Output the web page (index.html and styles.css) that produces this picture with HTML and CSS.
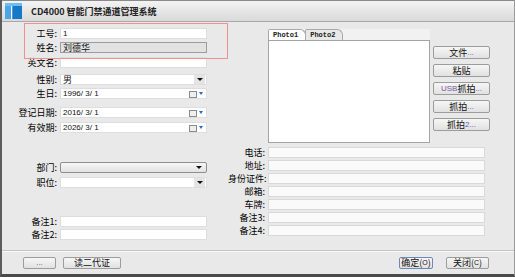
FILE: index.html
```html
<!DOCTYPE html>
<html lang="zh-CN">
<head>
  <meta charset="UTF-8" />
  <title>CD4000 智能门禁通道管理系统</title>
  <link rel="stylesheet" href="styles.css">
</head>
<body>
  <div class="janela">
    <div class="titulo">
      <svg class="logo" width="17" height="16" viewBox="0 0 17 16">
        <rect width="17" height="16" fill="#1c86d6"/>
        <rect x="0" y="0" width="17" height="3" fill="#6cbdf2"/>
        <rect x="0" y="3" width="6" height="13" fill="#4aa6ea"/>
        <rect x="6" y="3" width="1.5" height="13" fill="#ffffff"/>
        <rect x="7.5" y="3" width="9.5" height="13" fill="#1778c8"/>
      </svg>
      <span>CD4000 智能门禁通道管理系统</span>
    </div>

    <div class="principal">
      <!-- coluna da esquerda -->
      <div class="col-esq">
        <div class="linha">
          <label>工号:</label>
          <div class="campo">1</div>
        </div>
        <div class="linha mt3">
          <label>姓名:</label>
          <div class="campo cinza">刘德华</div>
        </div>
        <div class="linha mt4">
          <label>英文名:</label>
          <div class="campo"></div>
        </div>
        <div class="linha mt6">
          <label>性别:</label>
          <div class="campo combo">男<span class="seta"></span></div>
        </div>
        <div class="linha mt3">
          <label>生日:</label>
          <div class="campo data">1996/ 3/ 1<span class="cal"></span><span class="seta-azul"></span></div>
        </div>
        <div class="linha mt8">
          <label>登记日期:</label>
          <div class="campo data">2016/ 3/ 1<span class="cal"></span><span class="seta-azul"></span></div>
        </div>
        <div class="linha mt4">
          <label>有效期:</label>
          <div class="campo data">2026/ 3/ 1<span class="cal"></span><span class="seta-azul"></span></div>
        </div>
        <div class="linha mt29">
          <label>部门:</label>
          <div class="campo combo-btn"><span class="seta-preta"></span></div>
        </div>
        <div class="linha mt4">
          <label>职位:</label>
          <div class="campo combo"><span class="seta"></span></div>
        </div>
        <div class="linha mt28">
          <label>备注1:</label>
          <div class="campo"></div>
        </div>
        <div class="linha mt2">
          <label>备注2:</label>
          <div class="campo"></div>
        </div>
      </div>

      <!-- coluna da direita -->
      <div class="col-dir">
        <div class="foto-area">
          <div class="abas">
            <div class="abas-topo">
              <span class="aba ativa">Photo1</span>
              <span class="aba">Photo2</span>
            </div>
            <div class="painel"></div>
          </div>
          <div class="botoes-foto">
            <button class="btn">文件<i>...</i></button>
            <button class="btn">粘贴</button>
            <button class="btn"><i>USB</i>抓拍<i>...</i></button>
            <button class="btn">抓拍<i>...</i></button>
            <button class="btn">抓拍<i>2...</i></button>
          </div>
        </div>
        <div class="dados">
          <div class="linha-d"><label>电话:</label><div class="campo-d"></div></div>
          <div class="linha-d"><label>地址:</label><div class="campo-d"></div></div>
          <div class="linha-d"><label>身份证件:</label><div class="campo-d"></div></div>
          <div class="linha-d"><label>邮箱:</label><div class="campo-d"></div></div>
          <div class="linha-d"><label>车牌:</label><div class="campo-d"></div></div>
          <div class="linha-d"><label>备注3:</label><div class="campo-d"></div></div>
          <div class="linha-d"><label>备注4:</label><div class="campo-d"></div></div>
        </div>
      </div>

      <div class="destaque"></div>
    </div>

    <div class="rodape">
      <div class="grupo">
        <button class="btn b-pontos"><i>...</i></button>
        <button class="btn b-ler">读二代证</button>
      </div>
      <div class="grupo">
        <button class="btn b-ok">确定(<u>O</u>)</button>
        <button class="btn b-fechar">关闭(<u>C</u>)</button>
      </div>
    </div>
  </div>
</body>
</html>
```

FILE: styles.css
```css
body {
  margin: 0;
  background: #e9e9e9;
  font-family: "Noto Sans CJK SC", "Liberation Sans", sans-serif;
  font-size: 9px;
  color: #111;
}
.janela {
  width: 515px;
  height: 277px;
  box-sizing: border-box;
  border-left: 2px solid #5c5c5c;
  border-right: 1px solid #9a9a9a;
  border-bottom: 3px solid #4a4a4a;
  background: #e9e9e9;
  display: flex;
  flex-direction: column;
}
.titulo {
  border-top: 1px solid #8a8a8a;
  border-bottom: 1px solid #a8a8a8;
  background: linear-gradient(#f3f3f3, #d9d9d9);
  display: flex;
  align-items: center;
  box-sizing: border-box;
  height: 22px;
}
.titulo .logo {
  margin-left: 3px;
  margin-right: 9px;
}
.titulo span {
  font-weight: bold;
  font-size: 9px;
  color: #222;
}
.principal {
  height: 228px;
  display: grid;
  grid-template-columns: 226px 1fr;
  position: relative;
  border-bottom: 1px solid #c4c4c4;
}
.destaque {
  position: absolute;
  left: 22px;
  top: 1px;
  width: 202px;
  height: 34px;
  border: 1px solid #f09090;
}
.col-esq {
  padding-top: 6px;
}
.linha {
  display: flex;
  align-items: center;
  height: 11px;
}
.linha label {
  width: 55px;
  text-align: right;
  font-weight: 400;
  color: #000;
  line-height: 11px;
  white-space: nowrap;
}
.mt2 { margin-top: 2px; }
.mt3 { margin-top: 3px; }
.mt4 { margin-top: 4px; }
.mt6 { margin-top: 6px; }
.mt8 { margin-top: 8px; }
.mt28 { margin-top: 28px; }
.mt29 { margin-top: 29px; }
.campo {
  margin-left: 3px;
  width: 147px;
  height: 11px;
  box-sizing: border-box;
  background: #fff;
  border: 1px solid #dedede;
  padding-left: 2px;
  line-height: 9px;
  position: relative;
  font-family: "Liberation Sans", "Noto Sans CJK SC", sans-serif;
  font-size: 8px;
}
.campo.cinza {
  background: #e2e2e2;
  border-color: #9c9c9c;
  font-family: "Noto Sans CJK SC", sans-serif;
  font-size: 9px;
}
.combo {
  font-family: "Noto Sans CJK SC", sans-serif;
  font-size: 9px;
}
.seta {
  position: absolute;
  right: 1px;
  top: 0;
  width: 11px;
  height: 9px;
  background: #e4e4e4;
}
.seta::after, .seta-preta::after {
  content: "";
  position: absolute;
  left: 3px;
  top: 3px;
  border-left: 3px solid transparent;
  border-right: 3px solid transparent;
  border-top: 3px solid #111;
}
.combo-btn {
  border: 1px solid #8e8e8e;
  border-radius: 2px;
  background: linear-gradient(#f7f7f7, #e2e2e2);
}
.seta-preta {
  position: absolute;
  right: 4px;
  top: 0;
  width: 9px;
  height: 9px;
}
.data {
  font-size: 8px;
}
.cal {
  position: absolute;
  right: 9px;
  top: 2px;
  width: 6px;
  height: 5px;
  border: 1px solid #8a8a8a;
  background: #eeeeee;
}
.seta-azul {
  position: absolute;
  right: 3px;
  top: 3px;
  border-left: 2px solid transparent;
  border-right: 2px solid transparent;
  border-top: 3px solid #2a6ad0;
}
.col-dir {
  padding-top: 7px;
}
.foto-area {
  display: flex;
  height: 114px;
}
.abas {
  margin-left: 40px;
  width: 162px;
  display: flex;
  flex-direction: column;
}
.abas-topo {
  height: 11px;
  background: #f1f1f1;
  display: flex;
  align-items: flex-end;
}
.aba {
  font-family: "Liberation Mono", monospace;
  font-weight: bold;
  font-size: 7px;
  height: 10px;
  line-height: 10px;
  padding: 0 7px 0 4px;
  border: 1px solid #a8a8a8;
  border-bottom: none;
  border-radius: 2px 6px 0 0;
  background: #e8e8e8;
  color: #222;
}
.aba.ativa {
  background: #fff;
  margin-right: -1px;
  position: relative;
  z-index: 1;
}
.painel {
  flex: 1;
  background: #fff;
  border: 1px solid #a4a4a4;
}
.botoes-foto {
  margin-left: 3px;
  padding-top: 17px;
  display: flex;
  flex-direction: column;
  gap: 5px;
}
.btn {
  font-family: "Noto Sans CJK SC", sans-serif;
  font-size: 9px;
  color: #111;
  border: 1px solid #9c9c9c;
  border-radius: 2px;
  background: linear-gradient(#f6f6f6, #e1e1e1);
  padding: 0;
  margin: 0;
  line-height: 10px;
  white-space: nowrap;
  display: flex;
  align-items: center;
  justify-content: center;
}
.btn i {
  font-style: normal;
  color: #7656a8;
  font-family: "Liberation Sans", sans-serif;
  font-size: 8px;
}
.botoes-foto .btn {
  width: 57px;
  height: 13px;
}
.dados {
  margin-top: 4px;
  display: flex;
  flex-direction: column;
  gap: 2px;
}
.linha-d {
  display: flex;
  align-items: center;
  height: 11px;
}
.linha-d label {
  width: 37px;
  text-align: right;
  color: #000;
  white-space: nowrap;
  line-height: 11px;
}
.campo-d {
  margin-left: 3px;
  width: 217px;
  height: 11px;
  box-sizing: border-box;
  background: #fafafa;
  border: 1px solid #d9d9d9;
}
.rodape {
  flex: 1;
  border-top: 1px solid #fafafa;
  display: flex;
  justify-content: space-between;
  padding: 5px 25px 0 21px;
}
.grupo {
  display: flex;
  gap: 7px;
  align-items: flex-start;
}
.rodape .btn {
  height: 12px;
}
.b-pontos { width: 33px; }
.b-ler { width: 58px; }
.b-ok { width: 34px; margin-right: 6px; }
.b-fechar { width: 43px; }
.btn u {
  text-decoration: none;
  font-family: "Liberation Sans", sans-serif;
  font-size: 7px;
}
.b-ok {
  border-color: #6d88b8;
}
```
